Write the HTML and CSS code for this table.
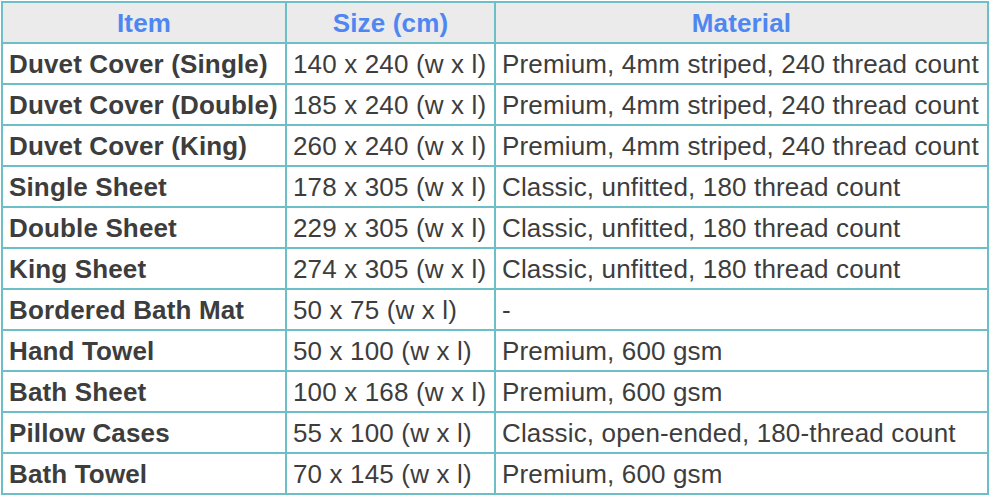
FILE: index.html
```html
<!DOCTYPE html>
<html>
<head>
<meta charset="utf-8">
<link rel="stylesheet" href="styles.css">
</head>
<body>
<table class="sizes">
  <colgroup>
    <col class="c-item">
    <col class="c-size">
    <col class="c-mat">
  </colgroup>
  <thead>
    <tr><th>Item</th><th>Size (cm)</th><th>Material</th></tr>
  </thead>
  <tbody>
    <tr><td class="item">Duvet Cover (Single)</td><td>140 x 240 (w x l)</td><td>Premium, 4mm striped, 240 thread count</td></tr>
    <tr><td class="item">Duvet Cover (Double)</td><td>185 x 240 (w x l)</td><td>Premium, 4mm striped, 240 thread count</td></tr>
    <tr><td class="item">Duvet Cover (King)</td><td>260 x 240 (w x l)</td><td>Premium, 4mm striped, 240 thread count</td></tr>
    <tr><td class="item">Single Sheet</td><td>178 x 305 (w x l)</td><td>Classic, unfitted, 180 thread count</td></tr>
    <tr><td class="item">Double Sheet</td><td>229 x 305 (w x l)</td><td>Classic, unfitted, 180 thread count</td></tr>
    <tr><td class="item">King Sheet</td><td>274 x 305 (w x l)</td><td>Classic, unfitted, 180 thread count</td></tr>
    <tr><td class="item">Bordered Bath Mat</td><td>50 x 75 (w x l)</td><td>-</td></tr>
    <tr><td class="item">Hand Towel</td><td>50 x 100 (w x l)</td><td>Premium, 600 gsm</td></tr>
    <tr><td class="item">Bath Sheet</td><td>100 x 168 (w x l)</td><td>Premium, 600 gsm</td></tr>
    <tr><td class="item">Pillow Cases</td><td>55 x 100 (w x l)</td><td>Classic, open-ended, 180-thread count</td></tr>
    <tr><td class="item">Bath Towel</td><td>70 x 145 (w x l)</td><td>Premium, 600 gsm</td></tr>
  </tbody>
</table>
</body>
</html>
```
FILE: styles.css
```css
html, body {
  margin: 0;
  padding: 0;
  background: #ffffff;
}
body {
  padding: 1px 0 0 1px;
  font-family: "Liberation Sans", Arial, sans-serif;
}
.sizes {
  border-collapse: collapse;
  table-layout: fixed;
  width: 988px;
  font-size: 26px;
  letter-spacing: 0.15px;
  color: #3d3d3d;
}
.c-item { width: 284px; }
.c-size { width: 209px; }
.c-mat { width: 493px; }
.sizes th,
.sizes td {
  border: 2px solid #6cbfc6;
  height: 41px;
  padding: 0 6px;
  box-sizing: border-box;
  vertical-align: middle;
  white-space: nowrap;
  line-height: 30px;
  text-align: left;
}
.sizes th {
  background: #ebebeb;
  color: #4f87f2;
  font-weight: bold;
  text-align: center;
}
.sizes td.item {
  font-weight: bold;
}
```
